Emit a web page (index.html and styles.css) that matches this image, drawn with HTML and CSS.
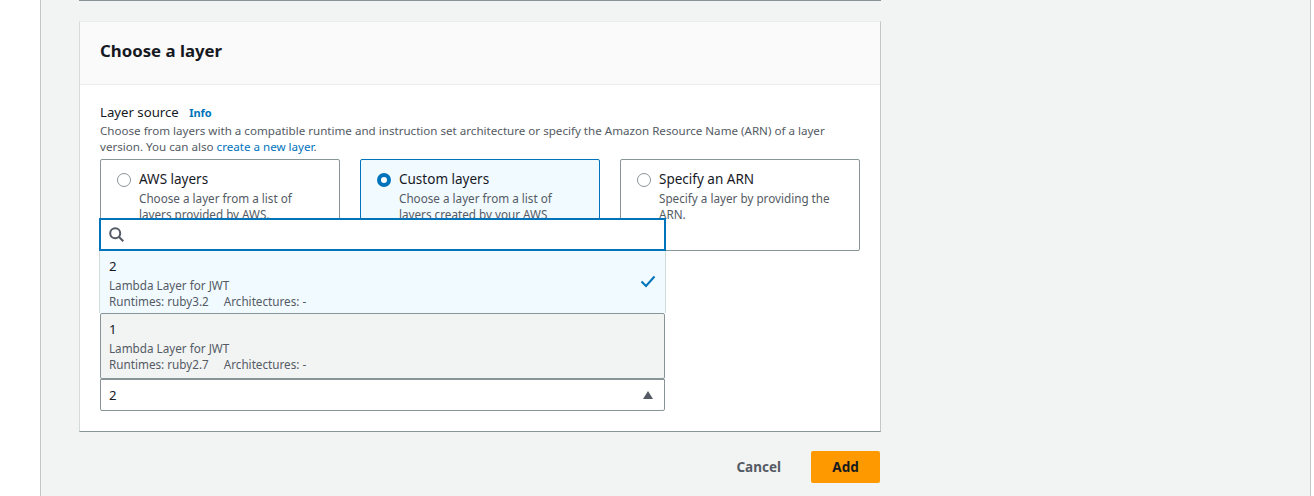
FILE: index.html
```html
<!DOCTYPE html>
<html>
<head>
    <title>Choose a layer</title>
    <link rel="stylesheet" href="styles.css">
</head>
<body>

<div class="page">
    <div class="prev-card"></div>

    <div class="card">
        <div class="card-header">
            <h2>Choose a layer</h2>
        </div>
        <div class="card-body">
            <div class="field-label">Layer source <a class="info" href="#">Info</a></div>
            <p class="field-desc">Choose from layers with a compatible runtime and instruction set architecture or specify the Amazon Resource Name (ARN) of a layer version. You can also <a href="#">create a new layer</a>.</p>

            <div class="tiles">
                <div class="tile">
                    <span class="radio"></span>
                    <div class="tile-text">
                        <div class="tile-title">AWS layers</div>
                        <div class="tile-desc">Choose a layer from a list of layers provided by AWS.</div>
                    </div>
                </div>
                <div class="tile selected">
                    <span class="radio"></span>
                    <div class="tile-text">
                        <div class="tile-title">Custom layers</div>
                        <div class="tile-desc">Choose a layer from a list of layers created by your AWS account.</div>
                    </div>
                </div>
                <div class="tile">
                    <span class="radio"></span>
                    <div class="tile-text">
                        <div class="tile-title">Specify an ARN</div>
                        <div class="tile-desc">Specify a layer by providing the ARN.</div>
                    </div>
                </div>
            </div>

            <div class="select">
                <div class="dropdown">
                    <div class="search">
                        <svg width="15" height="15" viewBox="0 0 15 15" fill="none" stroke="#545b64" stroke-width="2">
                            <circle cx="6.2" cy="6.2" r="5"/>
                            <path d="M9.8 9.8L14.3 14.3"/>
                        </svg>
                    </div>
                    <div class="option current">
                        <div class="option-title">2</div>
                        <div class="option-desc">Lambda Layer for JWT</div>
                        <div class="option-desc"><span class="runtime">Runtimes: ruby3.2</span>Architectures: -</div>
                        <svg class="check" width="16" height="16" viewBox="0 0 16 16" fill="none" stroke="#0073bb" stroke-width="2">
                            <path d="M1.5 8.5L6 13L14.5 3.5"/>
                        </svg>
                    </div>
                    <div class="option hovered">
                        <div class="option-title">1</div>
                        <div class="option-desc">Lambda Layer for JWT</div>
                        <div class="option-desc"><span class="runtime">Runtimes: ruby2.7</span>Architectures: -</div>
                    </div>
                </div>
                <div class="select-trigger">
                    <span>2</span>
                    <span class="caret"></span>
                </div>
            </div>
        </div>
    </div>

    <div class="actions">
        <button class="btn-cancel">Cancel</button>
        <button class="btn-add">Add</button>
    </div>
</div>

</body>
</html>
```

FILE: styles.css
```css
html, body {
    height: 100%;
}

body {
    margin: 0;
    background-color: #fff;
    font-family: "Noto Sans", sans-serif;
    font-size: 14px;
    color: #16191f;
    overflow: hidden;
}

a {
    color: #0073bb;
    text-decoration: none;
}

.page {
    box-sizing: border-box;
    height: 496px;
    margin-left: 40px;
    padding: 0 38px;
    background-color: #f2f3f3;
    border-left: 1px solid #c6c6c6;
    border-right: 1px solid #c6c6c6;
    width: 1271px;
}

.prev-card {
    width: 802px;
    height: 1px;
    background-color: #879596;
    margin-bottom: 20px;
}

.card {
    box-sizing: border-box;
    width: 802px;
    height: 411px;
    background-color: #fff;
    border-top: 1px solid #eaeded;
    border-bottom: 1px solid #879596;
    border-right: 1px solid #c6c6c6;
    border-left: 1px solid #d5dbdb;
}

.card-header {
    box-sizing: border-box;
    height: 63px;
    padding: 0 20px 4px;
    display: flex;
    align-items: center;
    background-color: #fafafa;
    border-bottom: 1px solid #eaeded;
}

.card-header h2 {
    margin: 0;
    font-size: 16.8px;
    line-height: 20px;
    font-weight: 700;
}

.card-body {
    padding: 17px 20px 0;
}

.field-label {
    font-size: 13.2px;
    line-height: 20px;
}

.info {
    margin-left: 7px;
    font-size: 11px;
    font-weight: 700;
}

.field-desc {
    margin: 0;
    font-size: 11.6px;
    line-height: 16px;
    color: #545b64;
}

.tiles {
    display: grid;
    grid-template-columns: repeat(3, 240px);
    gap: 20px;
    margin-top: 4px;
}

.tile {
    box-sizing: border-box;
    height: 92px;
    padding: 10px 16px;
    display: flex;
    gap: 8px;
    border: 1px solid #879596;
    border-radius: 2px;
    background-color: #fff;
}

.tile.selected {
    border-color: #0073bb;
    background-color: #f1faff;
}

.radio {
    box-sizing: border-box;
    flex: none;
    width: 14px;
    height: 14px;
    margin-top: 3px;
    border: 1px solid #879596;
    border-radius: 50%;
    background-color: #fff;
}

.selected .radio {
    border: 4px solid #0073bb;
}

.tile-text {
    width: 174px;
}

.tile-title {
    font-size: 13.5px;
    line-height: 18px;
}

.tile-desc {
    margin-top: 2px;
    font-size: 11.7px;
    line-height: 16px;
    color: #545b64;
}

.select {
    position: relative;
    width: 565px;
    margin-top: 128px;
}

.select-trigger {
    box-sizing: border-box;
    height: 32px;
    padding: 0 11px 0 8px;
    display: flex;
    align-items: center;
    justify-content: space-between;
    font-size: 13.2px;
    background-color: #fff;
    border: 1px solid #879596;
    border-radius: 0 0 2px 2px;
}

.caret {
    width: 0;
    height: 0;
    border-left: 5.5px solid transparent;
    border-right: 5.5px solid transparent;
    border-bottom: 8px solid #545b64;
}

/* sits over the tiles, opens upward from the select */
.dropdown {
    position: absolute;
    left: 0;
    right: -1px;
    bottom: 100%;
    background-color: #fff;
}

.search {
    box-sizing: border-box;
    height: 33px;
    margin-left: -1px;
    padding: 0 7px 0 8px;
    display: flex;
    align-items: center;
    background-color: #fff;
    border: 2px solid #0073bb;
}

.option {
    box-sizing: border-box;
    position: relative;
    padding: 5px 8px 0;
    font-size: 11.7px;
    line-height: 16px;
}

.option.current {
    height: 62px;
    margin-left: -1px;
    padding-left: 9px;
    background-color: #f1faff;
    border-left: 1px solid #d5dbdb;
    border-right: 1px solid #d5dbdb;
}

.option.hovered {
    height: 66px;
    margin-right: 1px;
    background-color: #f2f3f3;
    border: 1px solid #879596;
    border-radius: 2px;
}

.option-title {
    font-size: 13.2px;
    line-height: 21px;
}

.option-desc {
    color: #545b64;
}

.runtime {
    margin-right: 15px;
}

.check {
    position: absolute;
    right: 9px;
    top: 22px;
}

.actions {
    display: flex;
    justify-content: flex-end;
    align-items: center;
    gap: 30px;
    width: 801px;
    margin-top: 19px;
}

.actions button {
    font-family: "Noto Sans", sans-serif;
    font-size: 13.5px;
    font-weight: 700;
    border: none;
    border-radius: 2px;
}

.btn-cancel {
    padding: 0;
    background: none;
    color: #545b64;
}

.btn-add {
    width: 69px;
    height: 32px;
    background-color: #ff9900;
    color: #16191f;
}
```
